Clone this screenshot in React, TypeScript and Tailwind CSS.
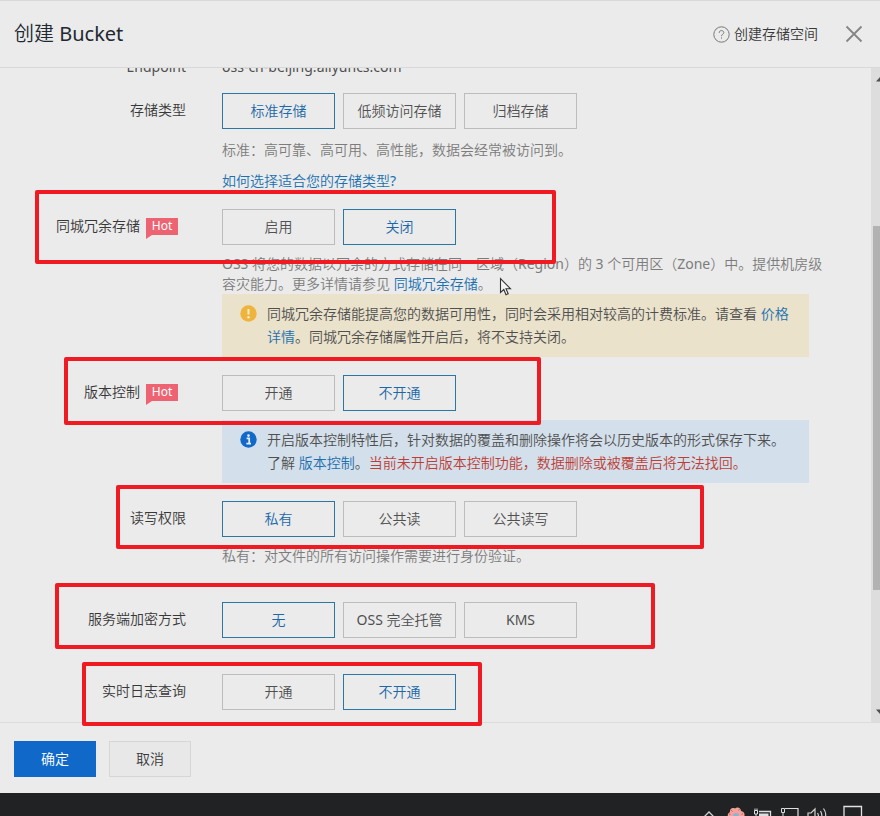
import { ReactNode, useState } from "react";
import clsx from "clsx";

const LINK = "text-[#2070b0] hover:underline";

function HotTag() {
  return (
    <span className="relative ml-1.5 inline-flex h-[17px] w-8 items-center justify-center bg-[#ee6372] text-xs leading-none text-white">
      Hot
      <svg className="absolute left-0 top-full" width="6" height="4" viewBox="0 0 6 4" aria-hidden="true">
        <path d="M0 0H6L0 4Z" fill="#ee6372" />
      </svg>
    </span>
  );
}

interface OptionGroupProps {
  id: string;
  options: string[];
  initial: string;
}

function OptionGroup({ id, options, initial }: OptionGroupProps) {
  const [value, setValue] = useState(initial);

  return (
    <div role="group" aria-labelledby={id} className="flex gap-2">
      {options.map((option) => (
        <button
          key={option}
          type="button"
          aria-pressed={option === value}
          onClick={() => setValue(option)}
          className={clsx(
            "h-9 min-w-[113px] border px-3 whitespace-nowrap",
            option === value
              ? "border-[#2b76a5] text-[#1c68a8]"
              : "border-[#bcbcbc] text-[#505050]"
          )}
        >
          {option}
        </button>
      ))}
    </div>
  );
}

interface FieldProps extends OptionGroupProps {
  label: string;
  hot?: boolean;
  children?: ReactNode;
}

function Field({ label, hot, children, ...group }: FieldProps) {
  return (
    <div className="flex">
      <div
        className={clsx(
          "flex h-[34px] w-[222px] shrink-0 items-center justify-end text-[#383838]",
          hot ? "pr-11" : "pr-9"
        )}
      >
        <span id={group.id}>{label}</span>
        {hot && <HotTag />}
      </div>
      <div className="min-w-0 flex-1">
        <OptionGroup {...group} />
        {children}
      </div>
    </div>
  );
}

interface NoticeProps {
  type: "warning" | "info";
  children: ReactNode;
}

function Notice({ type, children }: NoticeProps) {
  return (
    <div
      className={clsx(
        "flex max-w-[587px] gap-2.5 pt-2 pb-[9px] pl-[18px] leading-[23px] text-[#505050]",
        type === "warning" ? "bg-[#eae2cb]" : "bg-[#d3dfea]"
      )}
    >
      <svg className="mt-[3px] shrink-0" width="17" height="17" viewBox="0 0 17 17" aria-hidden="true">
        <circle cx="8.5" cy="8.5" r="8.2" fill={type === "warning" ? "#efb43c" : "#1269c7"} />
        {type === "warning" ? (
          <>
            <path d="M8.5 4V9.6" stroke="#f6ecd2" strokeWidth="2" />
            <circle cx="8.5" cy="12.2" r="1.2" fill="#f6ecd2" />
          </>
        ) : (
          <>
            <circle cx="8.5" cy="4.6" r="1.3" fill="#e6eef6" />
            <path d="M6.6 7.4H9.2V12.4M6.4 12.6H11" stroke="#e6eef6" strokeWidth="1.7" fill="none" />
          </>
        )}
      </svg>
      <p className="whitespace-nowrap">{children}</p>
    </div>
  );
}

function Header() {
  return (
    <header className="flex h-[68px] shrink-0 items-center justify-between border-y border-[#d8d8d8] pl-3.5 pr-[17px]">
      <h1 className="text-xl text-[#222831]">创建 Bucket</h1>
      <div className="flex items-center">
        <a href="#help" className="flex items-center gap-1 text-[#383838]">
          <svg width="17" height="17" viewBox="0 0 17 17" fill="none" stroke="#777777" aria-hidden="true">
            <circle cx="8.5" cy="8.5" r="7.7" />
            <path d="M6.2 6.9C6.2 5.4 7.1 4.6 8.5 4.6S10.8 5.5 10.8 6.6C10.8 8.1 8.5 8.3 8.5 10.2M8.5 11.4V12.6" />
          </svg>
          创建存储空间
        </a>
        <button type="button" aria-label="关闭" className="ml-[27px]">
          <svg width="18" height="18" viewBox="0 0 18 18" stroke="#858585" strokeWidth="1.8" aria-hidden="true">
            <path d="M1.5 1.5L16.5 16.5M16.5 1.5L1.5 16.5" />
          </svg>
        </button>
      </div>
    </header>
  );
}

function ScrollBar() {
  return (
    <div className="flex w-[9px] shrink-0 flex-col bg-[#dddddd] pl-0.5" aria-hidden="true">
      <svg className="mt-[9px] self-end" width="4" height="5" viewBox="0 0 4 5">
        <path d="M0 4.5L4 0V4.5Z" fill="#505050" />
      </svg>
      <div className="grow-[144]" />
      <div className="grow-[364] bg-[#b2b2b2]" />
      <div className="grow-[119]" />
      <svg className="mb-2 self-end" width="4" height="5" viewBox="0 0 4 5">
        <path d="M0 0.5H4V5Z" fill="#505050" />
      </svg>
    </div>
  );
}

function TaskBar() {
  return (
    <div className="flex h-[23px] shrink-0 items-start justify-end overflow-hidden bg-[#212224] pr-[17px] pt-3">
      <svg width="12" height="12" viewBox="0 0 12 12" fill="none" stroke="#d0d0d0" strokeWidth="1.3" aria-hidden="true">
        <path d="M1 12L6 7L11 12" />
      </svg>
      <svg className="ml-3" width="18" height="12" viewBox="0 0 18 12" aria-hidden="true">
        <path
          d="M1 12C0 9 2 7.5 3 7C2.500 4 5 2 8 3.500C10 1.500 14 2.500 14 6C17 6.500 18.500 9 17 12Z"
          fill="#f2a49c"
        />
        <path d="M4 5L5.500 6.500M12.500 4L11.500 5.500M2 9L3.500 9.500M16 8.500L14.500 9.500" stroke="#d85858" />
        <circle cx="9" cy="11" r="3" fill="#8fb0d0" />
      </svg>
      <svg className="ml-2" width="20" height="12" viewBox="0 0 20 12" fill="none" stroke="#dedede" aria-hidden="true">
        <path d="M1.500 5.500H4.500V9H1.500ZM2 3.500V5.500M4 3.500V5.500M3 9V12" />
        <path d="M6 6.500H17.500V12" strokeWidth="1.3" />
        <path d="M6 8.500H15.500V12H6Z" fill="#dedede" stroke="none" />
      </svg>
      <svg className="ml-[6px]" width="20" height="12" viewBox="0 0 20 12" fill="none" stroke="#dedede" aria-hidden="true">
        <path d="M2.500 3.500H5.500V7.500H2.500ZM4 7.500V12" />
        <path d="M6 3.500H19V12" strokeWidth="1.200" />
      </svg>
      <svg className="ml-2" width="20" height="12" viewBox="0 0 20 12" fill="none" stroke="#d4d4d4" strokeWidth="1.200" aria-hidden="true">
        <path d="M1 12V8H4L8 4V12" />
        <path d="M10.500 8C11.500 9.500 11.500 11 11.300 12M13.500 6C15 8.500 15 10.500 14.700 12M16.500 3.500C19 7 19 10 18.300 12" />
      </svg>
      <svg className="ml-4" width="20" height="12" viewBox="0 0 20 12" fill="none" stroke="#e2e2e2" strokeWidth="1.300" aria-hidden="true">
        <path d="M1 12V1.500H18.500V12" />
      </svg>
    </div>
  );
}

// hand-drawn frames that point out the settings to check
const frames = [
  "left-[35px] top-[190px] w-[521px] h-[74px]",
  "left-[64px] top-[357px] w-[477px] h-[68px]",
  "left-[116px] top-[485px] w-[588px] h-[64px]",
  "left-[55px] top-[583px] w-[600px] h-[66px]",
  "left-[82px] top-[662px] w-[400px] h-[64px]",
];

export default function App() {
  return (
    <div className="relative flex h-screen flex-col overflow-hidden bg-[#ebebeb] font-['Noto_Sans','Noto_Sans_CJK_SC_DemiLight','Noto_Sans_CJK_SC',sans-serif] text-sm leading-5">
      <Header />

      <main className="flex min-h-0 flex-1">
        <div className="min-w-0 flex-1 overflow-hidden">
          <div className="-mt-[11px] flex text-[#505050]">
            <span className="w-[222px] shrink-0 pr-9 text-right">Endpoint</span>
            <span>oss-cn-beijing.aliyuncs.com</span>
          </div>

          <div className="mt-4 flex flex-col gap-[18px]">
            <Field id="storage" label="存储类型" options={["标准存储", "低频访问存储", "归档存储"]} initial="标准存储">
              <p className="mt-[11px] text-[#7c7c7c]">标准：高可靠、高可用、高性能，数据会经常被访问到。</p>
              <p className="mt-[11px]">
                <a href="#storage-type" className={LINK}>如何选择适合您的存储类型?</a>
              </p>
            </Field>

            <Field id="zrs" label="同城冗余存储" hot options={["启用", "关闭"]} initial="关闭">
              <p className="mt-[9px] whitespace-nowrap text-[#7c7c7c]">
                OSS 将您的数据以冗余的方式存储在同一区域（Region）的 3 个可用区（Zone）中。提供机房级
                <br />
                容灾能力。更多详情请参见 <a href="#zrs-doc" className={LINK}>同城冗余存储</a>。
              </p>
              <Notice type="warning">
                同城冗余存储能提高您的数据可用性，同时会采用相对较高的计费标准。请查看{" "}
                <a href="#price" className={LINK}>
                  价格
                  <br />
                  详情
                </a>
                。同城冗余存储属性开启后，将不支持关闭。
              </Notice>
            </Field>

            <Field id="version" label="版本控制" hot options={["开通", "不开通"]} initial="不开通">
              <div className="mt-[9px]">
                <Notice type="info">
                  开启版本控制特性后，针对数据的覆盖和删除操作将会以历史版本的形式保存下来。
                  <br />
                  了解 <a href="#version-doc" className={LINK}>版本控制</a>。
                  <span className="text-[#be3d35]">当前未开启版本控制功能，数据删除或被覆盖后将无法找回。</span>
                </Notice>
              </div>
            </Field>

            <Field id="acl" label="读写权限" options={["私有", "公共读", "公共读写"]} initial="私有">
              <p className="mt-[9px] text-[#7c7c7c]">私有：对文件的所有访问操作需要进行身份验证。</p>
            </Field>

            <div className="mt-[18px] flex flex-col gap-9">
              <Field id="encrypt" label="服务端加密方式" options={["无", "OSS 完全托管", "KMS"]} initial="无" />
              <Field id="log" label="实时日志查询" options={["开通", "不开通"]} initial="不开通" />
            </div>
          </div>
        </div>
        <ScrollBar />
      </main>

      <footer className="flex h-[71px] shrink-0 items-start gap-[13px] border-t border-[#dcdcdc] pl-3.5 pt-[18px]">
        <button type="button" className="h-9 w-[82px] bg-[#1069c9] text-white">确定</button>
        <button type="button" className="h-9 w-[82px] border border-[#d6d6d6] bg-[#e8e8e8] text-[#383838]">取消</button>
      </footer>

      <TaskBar />

      {frames.map((frame) => (
        <div key={frame} className={clsx("pointer-events-none absolute rounded-xs border-4 border-[#f01a22]", frame)} />
      ))}

      <svg className="pointer-events-none absolute left-[499px] top-[277px]" width="13" height="20" viewBox="0 0 13 20" aria-hidden="true">
        <path
          d="M1.500 1.500V15.500L4.800 12.500L7 17.800L9.200 16.800L7 11.800H11.500Z"
          fill="#f4f4f4"
          stroke="#333333"
          strokeWidth="1.100"
        />
      </svg>
    </div>
  );
}
